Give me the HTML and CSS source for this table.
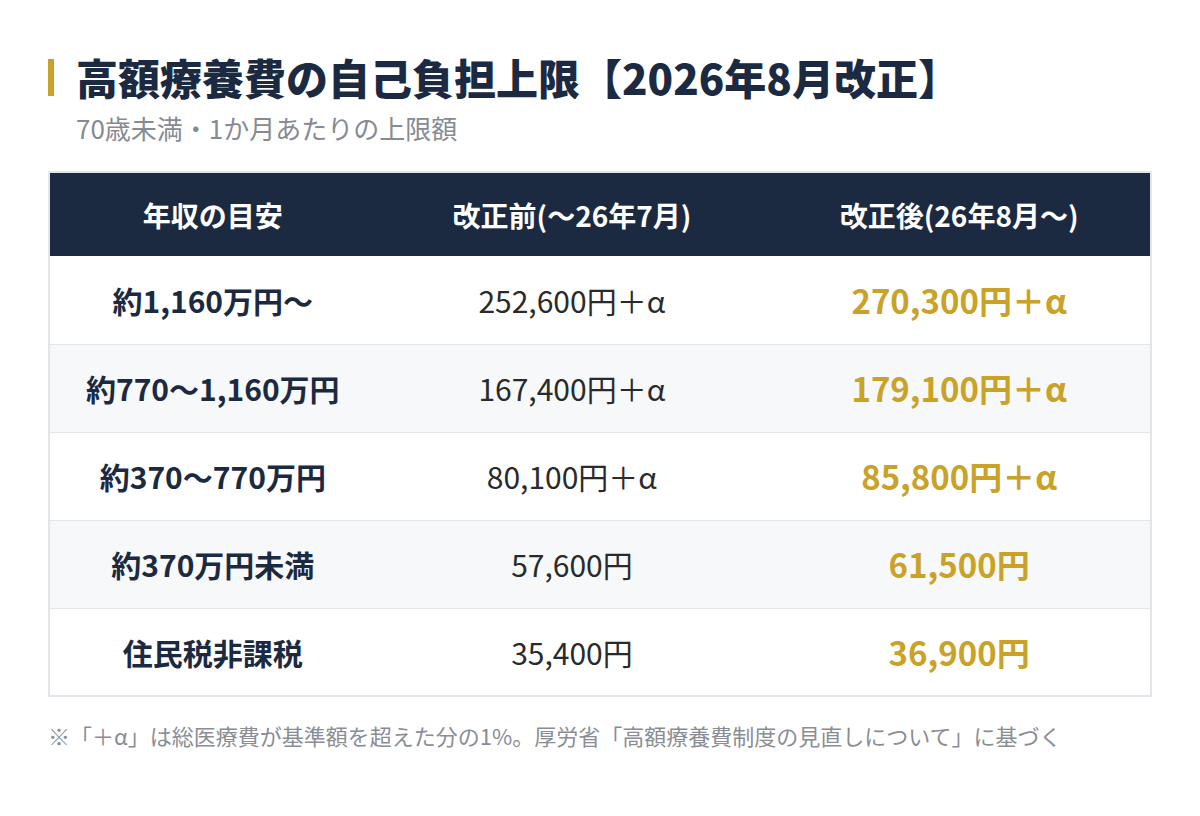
FILE: index.html
```html
<!DOCTYPE html>
<html lang="ja">
<head>
<meta charset="utf-8">
<title>高額療養費の自己負担上限</title>
<link rel="stylesheet" href="styles.css">
</head>
<body>
<div class="page">
  <header class="head">
    <div class="title-row">
      <span class="bar"></span>
      <h1 class="title">高額療養費の自己負担上限【2026年8月改正】</h1>
    </div>
    <p class="subtitle">70歳未満・1か月あたりの上限額</p>
  </header>
  <table class="limits">
    <colgroup>
      <col class="c1">
      <col class="c2">
      <col class="c3">
    </colgroup>
    <thead>
      <tr>
        <th>年収の目安</th>
        <th>改正前(〜26年7月)</th>
        <th>改正後(26年8月〜)</th>
      </tr>
    </thead>
    <tbody>
      <tr>
        <td class="inc">約1,160万円〜</td>
        <td class="old">252,600円＋α</td>
        <td class="new">270,300円＋α</td>
      </tr>
      <tr class="alt">
        <td class="inc">約770〜1,160万円</td>
        <td class="old">167,400円＋α</td>
        <td class="new">179,100円＋α</td>
      </tr>
      <tr>
        <td class="inc">約370〜770万円</td>
        <td class="old">80,100円＋α</td>
        <td class="new">85,800円＋α</td>
      </tr>
      <tr class="alt">
        <td class="inc">約370万円未満</td>
        <td class="old">57,600円</td>
        <td class="new">61,500円</td>
      </tr>
      <tr>
        <td class="inc">住民税非課税</td>
        <td class="old">35,400円</td>
        <td class="new">36,900円</td>
      </tr>
    </tbody>
  </table>
  <p class="note">※「＋α」は総医療費が基準額を超えた分の1%。厚労省「高額療養費制度の見直しについて」に基づく</p>
</div>
</body>
</html>
```
FILE: styles.css
```css
* { box-sizing: border-box; }
html, body { margin: 0; padding: 0; background: #ffffff; }
body {
  font-family: "Noto Sans CJK JP", "Noto Sans", sans-serif;
  color: #1c2a41;
}
.page {
  width: 1200px;
  height: 816px;
  padding: 52px 48px 0 48px;
}
.head { margin: 0; }
.title-row {
  display: flex;
  align-items: center;
  gap: 22px;
}
.bar {
  width: 6px;
  height: 37px;
  background: #c9a227;
  flex: none;
}
.title {
  margin: 0;
  font-size: 42px;
  line-height: 50px;
  font-weight: 900;
  color: #1c2a41;
}
.subtitle {
  margin: 9px 0 0 28px;
  font-size: 26px;
  line-height: 34px;
  color: #868a92;
}
.limits {
  margin-top: 26px;
  width: 1104px;
  border-collapse: collapse;
  border: 2px solid #e2e5ea;
  table-layout: fixed;
}
.c1 { width: 326px; }
.c2 { width: 392px; }
.c3 { width: 382px; }
.limits th {
  height: 84px;
  background: #1c2a41;
  color: #ffffff;
  font-size: 28px;
  font-weight: 700;
  text-align: center;
  padding: 0;
}
.limits td {
  height: 88px;
  text-align: center;
  font-size: 30px;
  padding: 0;
  border-bottom: 1px solid #e2e5ea;
}
.limits tr.alt td { background: #f6f8fa; }
.inc { font-weight: 700; color: #1c2a41; }
.old { font-weight: 400; color: #2a2a2a; }
.limits td.new { font-weight: 700; color: #c9a227; font-size: 33px; }
.note {
  margin: 22px 0 0 0;
  font-size: 22px;
  line-height: 32px;
  color: #8a8d94;
}
```
